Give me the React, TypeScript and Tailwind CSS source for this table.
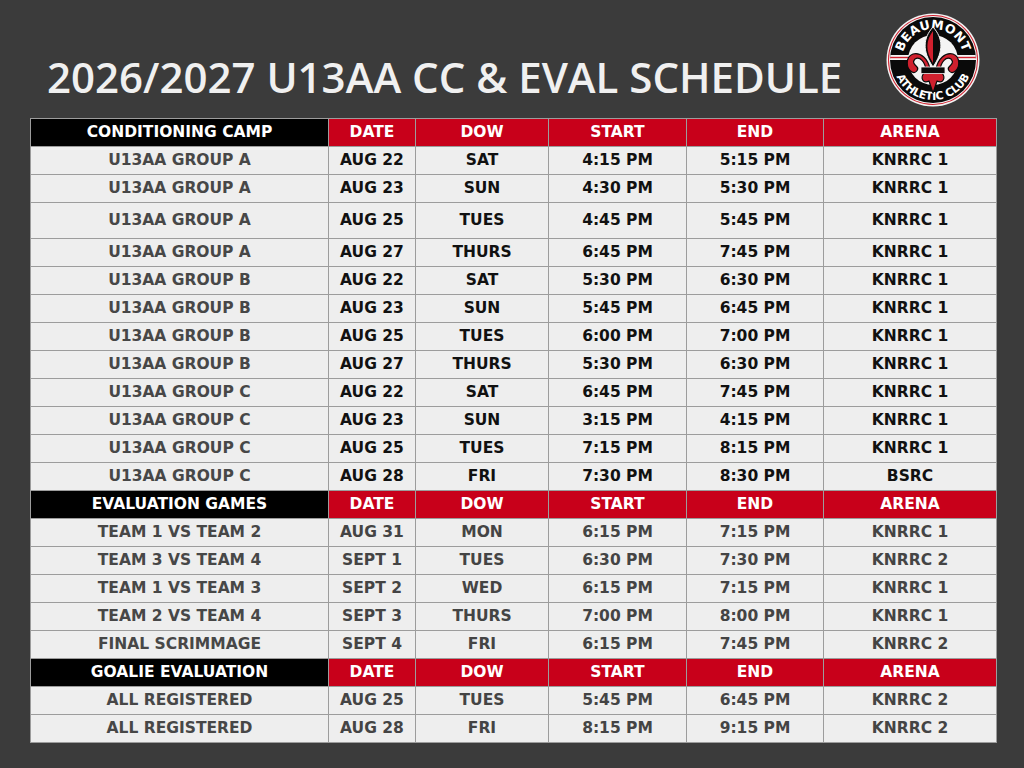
import React from "react";

type Row = { name: string; date: string; dow: string; start: string; end: string; arena: string; tall?: boolean };

const camp: Row[] = [
  { name: "U13AA GROUP A", date: "AUG 22", dow: "SAT", start: "4:15 PM", end: "5:15 PM", arena: "KNRRC 1" },
  { name: "U13AA GROUP A", date: "AUG 23", dow: "SUN", start: "4:30 PM", end: "5:30 PM", arena: "KNRRC 1" },
  { name: "U13AA GROUP A", date: "AUG 25", dow: "TUES", start: "4:45 PM", end: "5:45 PM", arena: "KNRRC 1", tall: true },
  { name: "U13AA GROUP A", date: "AUG 27", dow: "THURS", start: "6:45 PM", end: "7:45 PM", arena: "KNRRC 1" },
  { name: "U13AA GROUP B", date: "AUG 22", dow: "SAT", start: "5:30 PM", end: "6:30 PM", arena: "KNRRC 1" },
  { name: "U13AA GROUP B", date: "AUG 23", dow: "SUN", start: "5:45 PM", end: "6:45 PM", arena: "KNRRC 1" },
  { name: "U13AA GROUP B", date: "AUG 25", dow: "TUES", start: "6:00 PM", end: "7:00 PM", arena: "KNRRC 1" },
  { name: "U13AA GROUP B", date: "AUG 27", dow: "THURS", start: "5:30 PM", end: "6:30 PM", arena: "KNRRC 1" },
  { name: "U13AA GROUP C", date: "AUG 22", dow: "SAT", start: "6:45 PM", end: "7:45 PM", arena: "KNRRC 1" },
  { name: "U13AA GROUP C", date: "AUG 23", dow: "SUN", start: "3:15 PM", end: "4:15 PM", arena: "KNRRC 1" },
  { name: "U13AA GROUP C", date: "AUG 25", dow: "TUES", start: "7:15 PM", end: "8:15 PM", arena: "KNRRC 1" },
  { name: "U13AA GROUP C", date: "AUG 28", dow: "FRI", start: "7:30 PM", end: "8:30 PM", arena: "BSRC" },
];

const evals: Row[] = [
  { name: "TEAM 1 VS TEAM 2", date: "AUG 31", dow: "MON", start: "6:15 PM", end: "7:15 PM", arena: "KNRRC 1" },
  { name: "TEAM 3 VS TEAM 4", date: "SEPT 1", dow: "TUES", start: "6:30 PM", end: "7:30 PM", arena: "KNRRC 2" },
  { name: "TEAM 1 VS TEAM 3", date: "SEPT 2", dow: "WED", start: "6:15 PM", end: "7:15 PM", arena: "KNRRC 1" },
  { name: "TEAM 2 VS TEAM 4", date: "SEPT 3", dow: "THURS", start: "7:00 PM", end: "8:00 PM", arena: "KNRRC 1" },
  { name: "FINAL SCRIMMAGE", date: "SEPT 4", dow: "FRI", start: "6:15 PM", end: "7:45 PM", arena: "KNRRC 2" },
];

const goalie: Row[] = [
  { name: "ALL REGISTERED", date: "AUG 25", dow: "TUES", start: "5:45 PM", end: "6:45 PM", arena: "KNRRC 2" },
  { name: "ALL REGISTERED", date: "AUG 28", dow: "FRI", start: "8:15 PM", end: "9:15 PM", arena: "KNRRC 2" },
];

const cell = "border border-[#9c9c9c] text-center align-middle p-0";

function Header({ title }: { title: string }) {
  return (
    <tr className="h-[28px]">
      <td className={`${cell} bg-black text-white`}>{title}</td>
      {["DATE", "DOW", "START", "END", "ARENA"].map((h) => (
        <td key={h} className={`${cell} bg-[#c8001a] text-white`}>{h}</td>
      ))}
    </tr>
  );
}

function DataRows({ rows, dark }: { rows: Row[]; dark: boolean }) {
  const dataColor = dark ? "text-[#111111]" : "text-[#444444]";
  return (
    <>
      {rows.map((r, i) => (
        <tr key={i} className={r.tall ? "h-[36px]" : "h-[28px]"}>
          <td className={`${cell} bg-[#eeeeee] text-[#474747]`}>{r.name}</td>
          <td className={`${cell} bg-[#eeeeee] ${dataColor}`}>{r.date}</td>
          <td className={`${cell} bg-[#eeeeee] ${dataColor}`}>{r.dow}</td>
          <td className={`${cell} bg-[#eeeeee] ${dataColor}`}>{r.start}</td>
          <td className={`${cell} bg-[#eeeeee] ${dataColor}`}>{r.end}</td>
          <td className={`${cell} bg-[#eeeeee] ${dataColor}`}>{r.arena}</td>
        </tr>
      ))}
    </>
  );
}

function Logo() {
  return (
    <svg width="96" height="96" viewBox="-48 -48 96 96">
      <defs>
        <clipPath id="ring">
          <circle r="43" />
        </clipPath>
        <path id="topArc" d="M -31 0 A 31 31 0 0 1 31 0" />
        <path id="botArc" d="M -40 0 A 40 40 0 0 0 40 0" />
      </defs>
      <circle r="46.5" fill="#f4f4f4" />
      <circle r="45" fill="#d0202e" />
      <circle r="44" fill="#f4f4f4" />
      <circle r="43" fill="#0a0a0a" />
      <g clipPath="url(#ring)">
        <rect x="-46" y="-5" width="24" height="5" fill="#f4f4f4" />
        <rect x="22" y="-5" width="24" height="5" fill="#f4f4f4" />
        <rect x="-46" y="-3.2" width="24" height="1.4" fill="#d0202e" />
        <rect x="22" y="-3.2" width="24" height="1.4" fill="#d0202e" />
      </g>
      <circle r="25" fill="#f4f4f4" />
      <text fill="#ffffff" fontFamily="'DejaVu Sans', sans-serif" fontWeight="bold" fontSize="12.5" letterSpacing="0.2">
        <textPath href="#topArc" startOffset="50%" textAnchor="middle">BEAUMONT</textPath>
      </text>
      <text fill="#ffffff" fontFamily="'DejaVu Sans', sans-serif" fontWeight="bold" fontSize="11" letterSpacing="-0.2">
        <textPath href="#botArc" startOffset="50%" textAnchor="middle">ATHLETIC CLUB</textPath>
      </text>
      {/* fleur-de-lis */}
      <g stroke="#0a0a0a" strokeWidth="1.2" strokeLinejoin="round">
        <path d="M0,-33 C10,-22 11,-9 0,7 C-11,-9 -10,-22 0,-33 Z" fill="#0a0a0a" stroke="#f4f4f4" strokeWidth="1" />
        <path d="M0,-29 C-7,-20 -8,-9 0,3 Z" fill="#d0202e" stroke="none" />
        <path d="M-3,9 C-5,-1 -12,-8 -20,-6 C-28,-3 -27,9 -21,12 C-17,14 -14,9 -16,7 C-19,4 -21,2 -18,-1 C-13,-4 -8,2 -7,10 Z" fill="#d0202e" />
        <path d="M3,9 C5,-1 12,-8 20,-6 C28,-3 27,9 21,12 C17,14 14,9 16,7 C19,4 21,2 18,-1 C13,-4 8,2 7,10 Z" fill="#d0202e" />
        <path d="M-9,13 C-13,18 -10,24 -4,21 L0,33 L4,21 C10,24 13,18 9,13 Z" fill="#d0202e" />
        <rect x="-12" y="7" width="24" height="6.5" fill="#0a0a0a" stroke="#f4f4f4" strokeWidth="0.8" />
      </g>
    </svg>
  );
}

export default function App() {
  return (
    <div className="w-[1024px] h-[768px] bg-[#3b3b3b] overflow-hidden relative" style={{ fontFamily: "'DejaVu Sans', sans-serif" }}>
      <div className="absolute left-[885px] top-[12px]">
        <Logo />
      </div>
      <div className="pl-[47px] pt-[52px] h-[118px]">
        <h1 className="text-[#f0f0f0] text-[42px] leading-[50px] font-semibold tracking-[0px]" style={{ fontFamily: "'Open Sans', sans-serif" }}>
          2026/2027 U13AA CC &amp; EVAL SCHEDULE
        </h1>
      </div>
      <div className="pl-[30px]">
        <table className="table-fixed border-collapse w-[966px] text-[15.5px] font-bold leading-none">
          <colgroup>
            <col className="w-[298px]" />
            <col className="w-[87px]" />
            <col className="w-[133px]" />
            <col className="w-[138px]" />
            <col className="w-[137px]" />
            <col className="w-[173px]" />
          </colgroup>
          <tbody>
            <Header title="CONDITIONING CAMP" />
            <DataRows rows={camp} dark={true} />
            <Header title="EVALUATION GAMES" />
            <DataRows rows={evals} dark={false} />
            <Header title="GOALIE EVALUATION" />
            <DataRows rows={goalie} dark={false} />
          </tbody>
        </table>
      </div>
    </div>
  );
}
